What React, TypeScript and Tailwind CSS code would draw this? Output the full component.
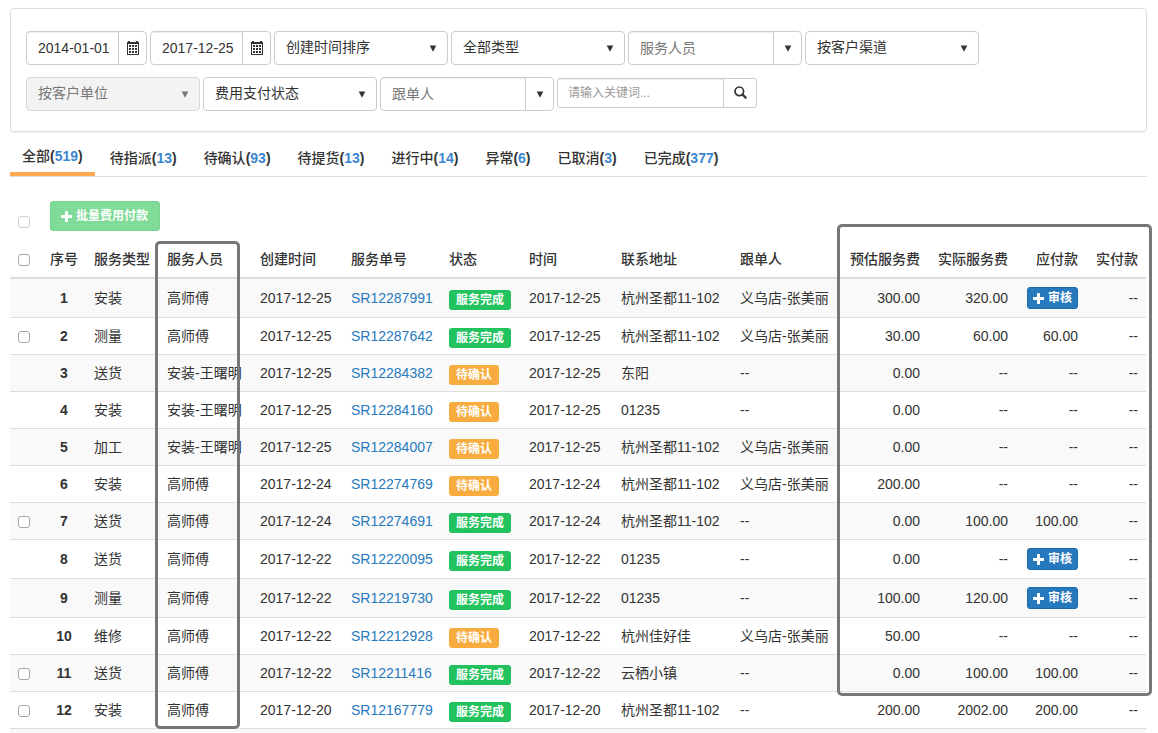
import type { ReactNode } from "react";

type Fee = string | "audit";

interface Order {
  no: number;
  pick: boolean;
  kind: string;
  worker: string;
  created: string;
  code: string;
  done: boolean;
  date: string;
  address: string;
  follower: string;
  estimate: string;
  actual: string;
  payable: Fee;
}

const SHOP = "义乌店-张美丽";
const CITY = "杭州圣都11-102";

const orders: Order[] = [
  { no: 1, pick: false, kind: "安装", worker: "高师傅", created: "2017-12-25", code: "SR12287991", done: true, date: "2017-12-25", address: CITY, follower: SHOP, estimate: "300.00", actual: "320.00", payable: "audit" },
  { no: 2, pick: true, kind: "测量", worker: "高师傅", created: "2017-12-25", code: "SR12287642", done: true, date: "2017-12-25", address: CITY, follower: SHOP, estimate: "30.00", actual: "60.00", payable: "60.00" },
  { no: 3, pick: false, kind: "送货", worker: "安装-王曙明", created: "2017-12-25", code: "SR12284382", done: false, date: "2017-12-25", address: "东阳", follower: "--", estimate: "0.00", actual: "--", payable: "--" },
  { no: 4, pick: false, kind: "安装", worker: "安装-王曙明", created: "2017-12-25", code: "SR12284160", done: false, date: "2017-12-25", address: "01235", follower: "--", estimate: "0.00", actual: "--", payable: "--" },
  { no: 5, pick: false, kind: "加工", worker: "安装-王曙明", created: "2017-12-25", code: "SR12284007", done: false, date: "2017-12-25", address: CITY, follower: SHOP, estimate: "0.00", actual: "--", payable: "--" },
  { no: 6, pick: false, kind: "安装", worker: "高师傅", created: "2017-12-24", code: "SR12274769", done: false, date: "2017-12-24", address: CITY, follower: SHOP, estimate: "200.00", actual: "--", payable: "--" },
  { no: 7, pick: true, kind: "送货", worker: "高师傅", created: "2017-12-24", code: "SR12274691", done: true, date: "2017-12-24", address: CITY, follower: "--", estimate: "0.00", actual: "100.00", payable: "100.00" },
  { no: 8, pick: false, kind: "送货", worker: "高师傅", created: "2017-12-22", code: "SR12220095", done: true, date: "2017-12-22", address: "01235", follower: "--", estimate: "0.00", actual: "--", payable: "audit" },
  { no: 9, pick: false, kind: "测量", worker: "高师傅", created: "2017-12-22", code: "SR12219730", done: true, date: "2017-12-22", address: "01235", follower: "--", estimate: "100.00", actual: "120.00", payable: "audit" },
  { no: 10, pick: false, kind: "维修", worker: "高师傅", created: "2017-12-22", code: "SR12212928", done: false, date: "2017-12-22", address: "杭州佳好佳", follower: SHOP, estimate: "50.00", actual: "--", payable: "--" },
  { no: 11, pick: true, kind: "送货", worker: "高师傅", created: "2017-12-22", code: "SR12211416", done: true, date: "2017-12-22", address: "云栖小镇", follower: "--", estimate: "0.00", actual: "100.00", payable: "100.00" },
  { no: 12, pick: true, kind: "安装", worker: "高师傅", created: "2017-12-20", code: "SR12167779", done: true, date: "2017-12-20", address: CITY, follower: "--", estimate: "200.00", actual: "2002.00", payable: "200.00" },
];

const tabs = [
  { label: "全部", count: 519 },
  { label: "待指派", count: 13 },
  { label: "待确认", count: 93 },
  { label: "待提货", count: 13 },
  { label: "进行中", count: 14 },
  { label: "异常", count: 6 },
  { label: "已取消", count: 3 },
  { label: "已完成", count: 377 },
];

function PlusIcon() {
  return (
    <svg viewBox="0 0 11 11" className="h-[11px] w-[11px] shrink-0" fill="currentColor" aria-hidden="true">
      <path d="M4.400 0h2.200q.4 0 .4 .4V4h3.600q.4 0 .4 .4v2.200q0 .4-.4 .4H7v3.600q0 .4-.4 .4H4.400q-.4 0-.4-.4V7H.4q-.4 0-.4-.4V4.400q0-.4 .4-.4H4V.4q0-.4 .4-.4z" />
    </svg>
  );
}

function CalendarIcon() {
  const cells = [0, 1, 2].flatMap((r) => [0, 1, 2].map((c) => ({ x: 2 + c * 3, y: 5 + r * 3 })));
  return (
    <svg viewBox="0 0 12 14" className="h-[14px] w-3" fill="none" shapeRendering="crispEdges" aria-hidden="true">
      <path d="M1 0h2v1H1zM9 0h2v1H9z" fill="#333" />
      <rect x=".5" y="1.500" width="11" height="12" stroke="#333" />
      <path d="M1 2h10v1H1z" fill="#333" />
      {cells.map((p) => (
        <rect key={`${p.x}-${p.y}`} x={p.x} y={p.y - 1} width="2" height="2" fill="#333" />
      ))}
    </svg>
  );
}

function SearchIcon() {
  return (
    <svg viewBox="0 0 13 13" className="h-[13px] w-[13px]" fill="none" stroke="#333" aria-hidden="true">
      <circle cx="5.300" cy="5.300" r="4.300" strokeWidth="1.700" />
      <path d="M8.500 8.500l3.100 3.100" strokeWidth="2.300" strokeLinecap="round" />
    </svg>
  );
}

function Caret() {
  return (
    <svg viewBox="0 0 8 7" className="h-[7px] w-2" fill="currentColor" aria-hidden="true">
      <path d="M.7 .5h6.600L4 6.700z" />
    </svg>
  );
}

function DateField({ label, value }: { label: string; value: string }) {
  return (
    <div className="flex h-[34px] w-[121px] overflow-hidden rounded border border-[#ccc]">
      <input aria-label={label} defaultValue={value} className="w-0 flex-1 pl-[11px] shadow-[inset_0_1px_1px_rgba(0,0,0,0.075)] outline-none" />
      <button type="button" aria-label={`选择${label}`} className="flex w-7 items-center justify-center border-l border-[#ccc]">
        <CalendarIcon />
      </button>
    </div>
  );
}

function SelectField({ label, disabled = false }: { label: string; disabled?: boolean }) {
  return (
    <div className="relative h-[34px] w-[174px]">
      <select
        aria-label={label}
        disabled={disabled}
        className="h-full w-full appearance-none rounded border border-[#ccc] bg-white pr-6 pb-[2px] pl-[11px] text-[#333] outline-none disabled:border-[#d8d8d8] disabled:bg-[#f3f3f3] disabled:text-[#777] disabled:opacity-100"
      >
        <option>{label}</option>
      </select>
      <span className={disabled ? "pointer-events-none absolute top-[14px] right-[11px] text-[#777]" : "pointer-events-none absolute top-[14px] right-[11px] text-[#333]"}>
        <Caret />
      </span>
    </div>
  );
}

function ComboField({ label }: { label: string }) {
  return (
    <div className="flex h-[34px] w-[174px] overflow-hidden rounded border border-[#ccc]">
      <input aria-label={label} placeholder={label} className="w-0 flex-1 pl-[11px] shadow-[inset_0_1px_1px_rgba(0,0,0,0.075)] outline-none placeholder:text-[#777]" />
      <button type="button" aria-label={`展开${label}`} className="flex w-7 items-center justify-center border-l border-[#ccc] pt-px">
        <Caret />
      </button>
    </div>
  );
}

function Tick({ label, disabled = false }: { label: string; disabled?: boolean }) {
  return (
    <input
      type="checkbox"
      aria-label={label}
      disabled={disabled}
      className="mt-[2px] block h-3 w-3 appearance-none rounded-[3px] border border-[#aaa] bg-white checked:bg-[#2679bd] disabled:border-[#d0d0d0]"
    />
  );
}

function Th({ children, align = "left" }: { children: ReactNode; align?: "left" | "center" | "right" }) {
  const alignment = { left: "text-left", center: "text-center", right: "text-right" }[align];
  return <th className={`px-2 py-2 font-medium whitespace-nowrap ${alignment}`}>{children}</th>;
}

export default function App() {
  return (
    <main className="bg-white pt-2 pr-[11px] pl-[10px] font-['Liberation_Sans','Noto_Sans_CJK_SC',sans-serif] text-sm text-[#333]">
      <form className="flex flex-col gap-3 rounded border border-[#ddd] px-[15px] pt-[22px] pb-5 shadow-[0_1px_1px_rgba(0,0,0,0.05)]">
        <div className="flex flex-wrap gap-[3px]">
          <DateField label="开始日期" value="2014-01-01" />
          <DateField label="结束日期" value="2017-12-25" />
          <SelectField label="创建时间排序" />
          <SelectField label="全部类型" />
          <ComboField label="服务人员" />
          <SelectField label="按客户渠道" />
        </div>
        <div className="flex flex-wrap gap-[3px]">
          <SelectField label="按客户单位" disabled />
          <SelectField label="费用支付状态" />
          <ComboField label="跟单人" />
          <div className="mt-px flex h-[30px] w-[200px] overflow-hidden rounded-[3px] border border-[#ccc]">
            <input aria-label="关键词" placeholder="请输入关键词..." className="w-0 flex-1 pl-[10px] text-xs shadow-[inset_0_1px_1px_rgba(0,0,0,0.075)] outline-none placeholder:text-[#999]" />
            <button type="button" aria-label="搜索" className="flex w-[33px] items-center justify-center border-l border-[#ccc] pb-[2px]">
              <SearchIcon />
            </button>
          </div>
        </div>
      </form>

      <nav className="flex h-[45px] gap-[3px] border-b border-[#ddd]">
        {tabs.map((tab, i) => (
          <a
            key={tab.label}
            href="#orders"
            aria-current={i === 0 ? "page" : undefined}
            className={
              i === 0
                ? "flex items-center border-b-4 border-[#ffaa50] px-3 pt-[11px] pb-1 font-medium"
                : "flex items-center px-3 pt-[7px] font-medium"
            }
          >
            {tab.label}
            <b>
              (<span className="text-[#3b86d1]">{tab.count}</span>)
            </b>
          </a>
        ))}
      </nav>

      <div className="flex gap-5 pt-6 pb-[10px] pl-2">
        <div className="flex items-end pb-[3px]">
          <Tick label="批量选择" disabled />
        </div>
        <button type="button" className="flex h-[30px] items-center gap-1 rounded-[3px] border border-[#77d492] bg-[#80db98] pr-[11px] pl-[10px] text-xs font-bold text-white">
          <PlusIcon />
          批量费用付款
        </button>
      </div>

      <div id="orders" className="relative mr-px">
        <table className="w-full table-fixed border-collapse leading-5">
          <colgroup>
            <col className="w-8" />
            <col className="w-11" />
            <col className="w-[73px]" />
            <col className="w-[93px]" />
            <col className="w-[91px]" />
            <col className="w-[98px]" />
            <col className="w-20" />
            <col className="w-[92px]" />
            <col className="w-[119px]" />
            <col />
            <col className="w-[86px]" />
            <col className="w-[88px]" />
            <col className="w-[70px]" />
            <col className="w-[60px]" />
          </colgroup>
          <thead>
            <tr className="border-b-2 border-[#ddd]">
              <Th><Tick label="全选" /></Th>
              <Th align="center">序号</Th>
              <Th>服务类型</Th>
              <Th>服务人员</Th>
              <Th>创建时间</Th>
              <Th>服务单号</Th>
              <Th>状态</Th>
              <Th>时间</Th>
              <Th>联系地址</Th>
              <Th>跟单人</Th>
              <Th align="right">预估服务费</Th>
              <Th align="right">实际服务费</Th>
              <Th align="right">应付款</Th>
              <Th align="right">实付款</Th>
            </tr>
          </thead>
          <tbody>
            {orders.map((o) => (
              <tr key={o.no} className="border-b border-[#ddd] whitespace-nowrap odd:bg-[#f9f9f9]">
                <td className="px-2 py-2">{o.pick && <Tick label={`选择 ${o.code}`} />}</td>
                <td className="px-2 py-2 text-center font-bold">{o.no}</td>
                <td className="px-2 py-2">{o.kind}</td>
                <td className="px-2 py-2">{o.worker}</td>
                <td className="px-2 py-2">{o.created}</td>
                <td className="px-2 py-2">
                  <a href="#orders" className="text-[#2679bd]">{o.code}</a>
                </td>
                <td className="px-2 pt-[10px] pb-[6px]">
                  <span
                    className={
                      o.done
                        ? "block w-fit rounded-[3px] bg-[#22c35e] px-[7px] text-xs leading-5 font-bold text-white"
                        : "block w-fit rounded-[3px] bg-[#f8ac40] px-[7px] text-xs leading-5 font-bold text-white"
                    }
                  >
                    {o.done ? "服务完成" : "待确认"}
                  </span>
                </td>
                <td className="px-2 py-2">{o.date}</td>
                <td className="px-2 py-2">{o.address}</td>
                <td className="px-2 py-2">{o.follower}</td>
                <td className="px-2 py-2 text-right">{o.estimate}</td>
                <td className="px-2 py-2 text-right">{o.actual}</td>
                <td className="px-2 py-2 text-right">
                  {o.payable === "audit" ? (
                    <button type="button" className="ml-auto flex h-[22px] items-center gap-1 rounded-[3px] border border-[#1f6aa8] bg-[#2679bd] px-[5px] text-xs font-bold text-white">
                      <PlusIcon />
                      审核
                    </button>
                  ) : (
                    o.payable
                  )}
                </td>
                <td className="px-2 py-2 text-right">--</td>
              </tr>
            ))}
            <tr className="h-1 bg-[#f9f9f9]">
              <td colSpan={14} />
            </tr>
          </tbody>
        </table>

        <div className="pointer-events-none absolute top-0 bottom-1 left-[145px] w-[85px] rounded-[5px] border-3 border-[#777]" />
        <div className="pointer-events-none absolute -top-[17px] -right-[6px] bottom-[37px] w-[315px] rounded-[5px] border-3 border-[#777]" />
      </div>
    </main>
  );
}
